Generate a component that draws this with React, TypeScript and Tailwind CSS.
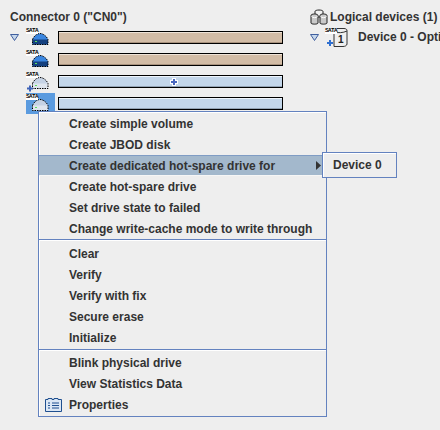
const groups = [
  ['Create simple volume', 'Create JBOD disk', 'Create dedicated hot-spare drive for', 'Create hot-spare drive', 'Set drive state to failed', 'Change write-cache mode to write through'],
  ['Clear', 'Verify', 'Verify with fix', 'Secure erase', 'Initialize'],
  ['Blink physical drive', 'View Statistics Data', 'Properties'],
];

function Triangle() {
  return (
    <svg width="9" height="7" viewBox="0 0 9 7" className="block">
      <path d="M0.5 0.5H8.5L4.5 6.5Z" fill="#c5d6ea" stroke="#3f5f9f" />
    </svg>
  );
}

function SataTag() {
  return (
    <span className="absolute left-0 top-[1px] bg-white font-['Liberation_Mono',monospace] text-[6px] leading-[6px] font-bold tracking-[-0.6px] text-black">
      SATA
    </span>
  );
}

function Drive({ tone, plus }: { tone: 'blue' | 'pale'; plus?: boolean }) {
  const fill = tone === 'blue' ? '#3a86e0' : '#c5d2e4';
  const base = tone === 'blue' ? '#14407f' : '#dfe5ee';
  const dome = 'M6.5 12.5C8 9 11 6.5 14 6.5C17 6.5 20.5 9 22 12.5V17.5H6.5Z';
  return (
    <div className="relative h-[22px] w-[23px]">
      <svg width="23" height="22" viewBox="0 0 23 22" className="block">
        <path d={dome} fill={fill} />
        <rect x="6.5" y="12.5" width="15.5" height="5" fill={base} />
        <path d={dome} fill="none" stroke="#000" strokeDasharray="1.5 1" />
        <rect x="9" y="14" width="2" height="1" fill="#5fe05f" />
        {plus && <path d="M1 17.5H7M4 14.5V20.5" stroke="#3f63b8" strokeWidth="2" />}
      </svg>
      <SataTag />
    </div>
  );
}

function DriveRow({ tone, plus, selected, bar }: { tone: 'blue' | 'pale'; plus?: boolean; selected?: boolean; bar: 'tan' | 'sky' }) {
  return (
    <div className="flex h-[22px] items-start">
      <div className={`flex h-[21px] w-[29px] shrink-0 ${selected ? 'bg-[#5b9bdf]' : ''}`}>
        <Drive tone={tone} plus={plus} />
      </div>
      <div
        className={`relative mt-[4px] ml-[3px] h-[13px] w-[225px] border border-black ${
          bar === 'tan' ? 'bg-[#d2bca6] shadow-[inset_0_1px_0_#eee3d8,inset_0_-1px_0_#a8927e]' : 'bg-[#c3d6ea] shadow-[inset_0_1px_0_#eef5fc,inset_0_-1px_0_#93a3b4]'
        }`}
      >
        {plus && (
          <svg width="8" height="8" viewBox="0 0 8 8" className="absolute left-[111px] top-[1.5px]">
            <path d="M4 0V8M0 4H8" stroke="#fff" strokeWidth="4" />
            <path d="M4 1V7M1 4H7" stroke="#4a68bf" strokeWidth="2" />
          </svg>
        )}
      </div>
    </div>
  );
}

function LogicalIcon() {
  return (
    <svg width="18" height="16" viewBox="0 0 18 16" className="block">
      <g fill="#c9c9c9" stroke="#222">
        <path d="M5 2.5C5 0.5 13 0.5 13 2.5V8H5Z" fill="#f2f2f2" />
        <path d="M1 6.5C1 4.5 8 4.5 8 6.5V14C8 15.5 1 15.5 1 14Z" />
        <path d="M10 6.5C10 4.5 17 4.5 17 6.5V14C17 15.5 10 15.5 10 14Z" />
      </g>
      <path d="M1.5 7.5C3 9 6 9 7.5 7.5M10.5 7.5C12 9 15 9 16.5 7.5" fill="none" stroke="#fff" />
    </svg>
  );
}

function DeviceIcon() {
  return (
    <div className="relative h-[20px] w-[23px]">
      <svg width="23" height="20" viewBox="0 0 23 20" className="block">
        <path d="M9 1.5H19C21 1.5 22 2.5 22 3.5V17C22 18.5 20 19.5 18 19.5H9Z" fill="#efefef" stroke="#333" />
        <path d="M9 5C13 6 18 6 22 4" fill="none" stroke="#333" />
        <path d="M2 16H8M5 13V19" stroke="#2f6fd0" strokeWidth="2" />
      </svg>
      <span className="absolute left-[13px] top-[7px] text-[10px] leading-[11px] font-bold text-[#222]">1</span>
      <span className="absolute left-0 top-[1px] bg-white font-['Liberation_Mono',monospace] text-[6px] leading-[6px] font-bold tracking-[-0.6px] text-black">
        SATA
      </span>
    </div>
  );
}

function PropertiesIcon() {
  return (
    <svg width="17" height="14" viewBox="0 0 17 14" className="absolute left-[6px] top-[4px]">
      <path d="M0.5 1.5H3V0.5H7V1.5H9V0.5H13V1.5H16.5V13.5H0.5Z" fill="#dbe7f5" stroke="#1f4f8f" />
      <path d="M3 5H5M7 5H14M3 7.5H5M7 7.5H14M3 10H5M7 10H14" stroke="#1f4f8f" />
    </svg>
  );
}

function Menu() {
  return (
    <div className="absolute left-[38px] top-[111px] w-[289px] border border-[#6382bf] bg-[#eeeeee] py-px shadow-[inset_1px_1px_0_#fff]">
      {groups.map((items, i) => (
        <div
          key={i}
          className={
            i === 0 ? '' : i === 1 ? 'border-t border-[#6382bf] pt-[3px] shadow-[inset_0_1px_0_#fff]' : 'mt-[1px] border-t border-[#6382bf] pt-[2px] shadow-[inset_0_1px_0_#fff]'
          }
        >
          {items.map((label) => {
            const hot = label.startsWith('Create dedicated');
            return (
              <div
                key={label}
                className={`relative flex h-[21px] items-center pl-[30px] ${hot ? 'bg-[#a3b8cc] shadow-[inset_0_1px_0_#7f9cc4,inset_0_-1px_0_#f6f6f6]' : ''}`}
              >
                {label === 'Properties' && <PropertiesIcon />}
                <span>{label}</span>
                {hot && (
                  <svg width="5" height="9" viewBox="0 0 5 9" className="absolute right-[5px] top-[6px]">
                    <path d="M0 0L5 4.5L0 9Z" fill="#333" />
                  </svg>
                )}
              </div>
            );
          })}
        </div>
      ))}
    </div>
  );
}

export default function App() {
  return (
    <div className="relative flex h-[430px] w-[440px] overflow-hidden bg-[#eeeeee] pl-[10px] pt-[9px] font-['Liberation_Sans',Arial,sans-serif] text-[12px] leading-[16px] font-bold text-[#333333]">
      <div className="w-[300px] shrink-0">
        <div>Connector 0 ("CN0")</div>
        <div className="mt-[2px] flex">
          <div className="w-[16px] pt-[7px]">
            <Triangle />
          </div>
          <div>
            <DriveRow tone="blue" bar="tan" />
            <DriveRow tone="blue" bar="tan" />
            <DriveRow tone="pale" bar="sky" plus />
            <DriveRow tone="pale" bar="sky" selected />
          </div>
        </div>
      </div>
      <div className="shrink-0">
        <div className="flex items-center gap-[2px]">
          <LogicalIcon />
          <span className="whitespace-nowrap">Logical devices (1)</span>
        </div>
        <div className="mt-[2px] flex items-center">
          <Triangle />
          <div className="ml-[6px]">
            <DeviceIcon />
          </div>
          <span className="ml-[10px] whitespace-nowrap">Device 0 - Opti</span>
        </div>
      </div>

      <Menu />
      <div className="absolute left-[322px] top-[152px] flex h-[26px] w-[75px] items-center border border-[#6382bf] bg-[#eeeeee] pl-[10px] shadow-[inset_1px_1px_0_#fff]">
        Device 0
      </div>
    </div>
  );
}
